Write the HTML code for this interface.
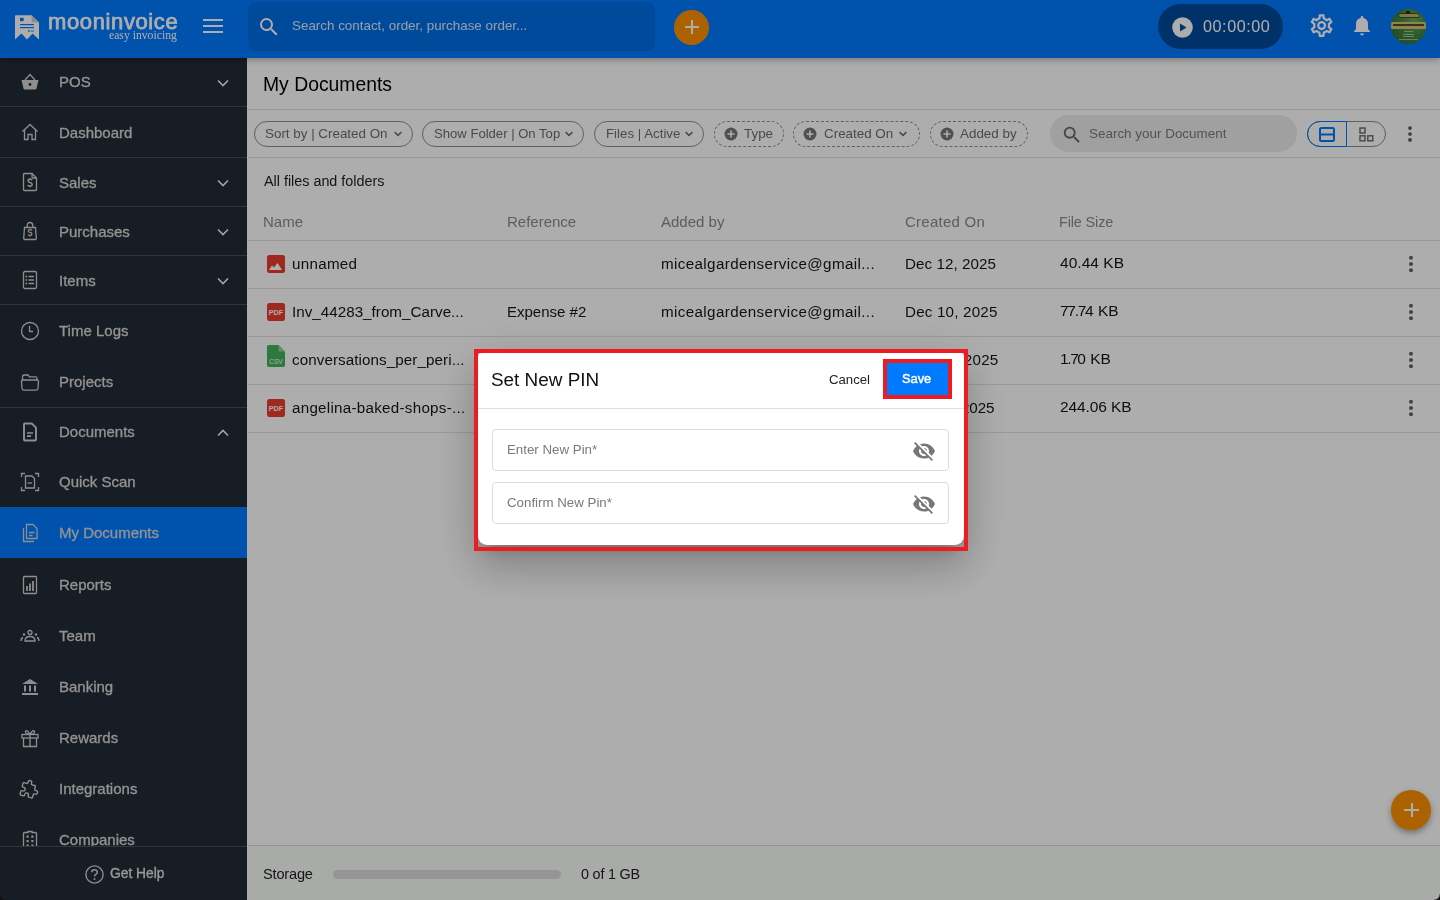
<!DOCTYPE html>
<html><head><meta charset="utf-8"><title>My Documents</title>
<style>
html,body{margin:0;padding:0;width:1440px;height:900px;overflow:hidden;background:#fff}
body{position:relative;font-family:"Liberation Sans",sans-serif}
.t{position:absolute;white-space:nowrap;line-height:1;will-change:transform}
.r{position:absolute}
.i{position:absolute;overflow:visible}
</style></head><body>
<div class="r" style="left:0px;top:0px;width:1440px;height:58px;background:#007aff;box-shadow:0 2px 6px rgba(0,0,0,.3);z-index:2"></div>
<svg class="i" style="left:15px;top:15px;z-index:3" width="25" height="25" viewBox="0 0 25 25"><path d="M0 1 Q0 0.3 1 0.3 L16.5 0.3 L24 7.5 L24 24.6 L17.5 18.6 L12 24.6 L6.5 18.6 L0 24.6 Z" fill="#fff"/><path d="M16.5 0.3 L16.5 7.5 L24 7.5 Z" fill="#cfcfcf"/><rect x="5" y="2.8" width="3.6" height="3.4" fill="#007aff"/><rect x="5" y="9" width="14" height="1.2" fill="#007aff"/><rect x="5" y="12" width="14" height="1.2" fill="#007aff"/><rect x="13" y="15.2" width="1.6" height="1.5" fill="#007aff"/><rect x="15.5" y="15.6" width="3.5" height="0.9" fill="#007aff"/></svg>
<div class="t" style="left:48px;top:10.68px;font-size:22px;color:#fff;font-weight:400;letter-spacing:0.62px;font-family:'Liberation Sans', sans-serif;z-index:3;-webkit-text-stroke:0.75px #fff">mooninvoice</div>
<div class="t" style="left:109px;top:30.10px;font-size:11.7px;color:#fff;font-weight:400;letter-spacing:0px;font-family:'Liberation Serif', serif;z-index:3">easy invoicing</div>
<div class="r" style="left:203px;top:19px;width:20px;height:2px;background:#fff;z-index:3"></div>
<div class="r" style="left:203px;top:25px;width:20px;height:2px;background:#fff;z-index:3"></div>
<div class="r" style="left:203px;top:31px;width:20px;height:2px;background:#fff;z-index:3"></div>
<div class="r" style="left:248px;top:2px;width:406.5px;height:49px;background:rgba(0,0,0,0.1);border-radius:8px;z-index:3"></div>
<svg class="i" style="left:257px;top:15px;z-index:3" width="24" height="24" viewBox="0 0 24 24"><path d="M15.5 14h-.79l-.28-.27A6.471 6.471 0 0 0 16 9.5 6.5 6.5 0 1 0 9.5 16c1.61 0 3.09-.59 4.23-1.57l.27.28v.79l5 4.99L20.49 19l-4.99-5zm-6 0C7.01 14 5 11.99 5 9.5S7.01 5 9.5 5 14 7.01 14 9.5 11.99 14 9.5 14z" fill="#fff"/></svg>
<div class="t" style="left:292.4px;top:18.66px;font-size:13.4px;color:rgba(255,255,255,.85);font-weight:400;letter-spacing:0px;font-family:'Liberation Sans', sans-serif;z-index:3">Search contact, order, purchase order...</div>
<div class="r" style="left:674px;top:10px;width:35px;height:35px;background:#ff9100;border-radius:50%;z-index:3"></div>
<div class="r" style="left:684.5px;top:26.3px;width:14.5px;height:2.0px;background:#fff;z-index:3"></div>
<div class="r" style="left:690.7px;top:20px;width:2.0px;height:14px;background:#fff;z-index:3"></div>
<div class="r" style="left:1158px;top:4px;width:124.5px;height:45px;background:#004b9c;border-radius:23px;z-index:3"></div>
<svg class="i" style="left:1171.5px;top:16.5px;z-index:3" width="21" height="21" viewBox="0 0 21 21"><circle cx="10.5" cy="10.5" r="10.3" fill="#fff"/><path d="M8 6.5 L14.5 10.5 L8 14.5 Z" fill="#004b9c"/></svg>
<div class="t" style="left:1202.8px;top:18.19px;font-size:16.2px;color:#fff;font-weight:400;letter-spacing:0.55px;font-family:'Liberation Sans', sans-serif;z-index:3">00:00:00</div>
<svg class="i" style="left:1308.4px;top:12.4px;z-index:3" width="27.2" height="27.2" viewBox="0 0 24 24"><path d="M19.43 12.98c.04-.32.07-.64.07-.98 0-.34-.03-.66-.07-.98l2.11-1.65c.19-.15.24-.42.12-.64l-2-3.46a.5.5 0 0 0-.61-.22l-2.49 1c-.52-.4-1.08-.73-1.69-.98l-.38-2.65A.488.488 0 0 0 14 2h-4c-.25 0-.46.18-.49.42l-.38 2.65c-.61.25-1.170.59-1.69.98l-2.49-1a.566.566 0 0 0-.18-.03c-.17 0-.34.09-.43.25l-2 3.46c-.13.22-.07.49.12.64l2.11 1.65c-.04.32-.07.65-.07.98 0 .33.03.66.07.98l-2.11 1.65c-.19.15-.24.42-.12.64l2 3.46a.5.5 0 0 0 .61.22l2.49-1c.52.4 1.08.73 1.69.98l.38 2.650c.03.24.24.42.49.42h4c.25 0 .46-.18.49-.42l.38-2.65c.61-.25 1.17-.59 1.69-.98l2.49 1c.06.02.12.03.18.03.17 0 .34-.09.43-.25l2-3.46c.12-.22.07-.49-.12-.64l-2.11-1.65zm-1.98-1.71c.04.31.05.52.05.73 0 .21-.02.43-.05.73l-.14 1.13.89.7 1.08.84-.7 1.21-1.27-.51-1.04-.42-.9.68c-.43.32-.84.56-1.25.73l-1.06.43-.16 1.13-.2 1.35h-1.4l-.19-1.35-.16-1.13-1.06-.43c-.43-.18-.83-.41-1.23-.71l-.91-.7-1.06.43-1.27.51-.7-1.21 1.08-.84.89-.7-.14-1.130c-.03-.31-.05-.54-.05-.74s.02-.43.05-.73l.14-1.13-.89-.7-1.08-.84.7-1.21 1.27.51 1.04.42.9-.68c.43-.32.84-.56 1.25-.73l1.06-.43.16-1.13.2-1.35h1.39l.19 1.35.16 1.13 1.06.43c.43.18.83.41 1.23.71l.91.7 1.06-.43 1.27-.51.7 1.21-1.07.85-.89.7.14 1.13zM12 8c-2.21 0-4 1.79-4 4s1.79 4 4 4 4-1.79 4-4-1.790-4-4-4zm0 6c-1.1 0-2-.9-2-2s.9-2 2-2 2 .9 2 2-.9 2-2 2z" fill="#fff"/></svg>
<svg class="i" style="left:1351.5px;top:15px;z-index:3" width="20" height="22" viewBox="0 0 20 22"><path d="M10 1 a1.3 1.3 0 0 1 1.3 1.3 v0.6 a6 6 0 0 1 4.7 5.9 v5.2 l2.5 3 H1.5 l2.5 -3 V8.8 a6 6 0 0 1 4.7 -5.9 v-0.6 A1.3 1.3 0 0 1 10 1z" fill="#fff"/><path d="M8 18.6 h4 a2 2 0 0 1 -4 0z" fill="#fff"/></svg>
<div class="r" style="left:1391px;top:9px;width:35px;height:35px;border-radius:50%;overflow:hidden;z-index:3;background:#3a7d40"><div class="r" style="left:0;top:0;width:35px;height:35px;background:radial-gradient(circle at 65% 35%,#6aa864 0%,#3f8544 45%,#2a6030 100%)"></div><div class="r" style="left:15px;top:2px;width:4px;height:2.5px;background:#2a2a1a"></div><div class="r" style="left:8px;top:5px;width:20px;height:3px;background:#c4b15e;border-radius:2px;box-shadow:0 0 0 0.7px #2f3f22"></div><div class="r" style="left:0;top:12.6px;width:35px;height:7px;background:#d3c56f"></div><div class="r" style="left:2px;top:15.2px;width:31px;height:2px;background:#3a3420;opacity:.85"></div><div class="r" style="left:13px;top:22px;width:9px;height:1px;background:#c8d8b0;opacity:.7"></div><div class="r" style="left:12px;top:24.6px;width:11px;height:1px;background:#c8d8b0;opacity:.7"></div><div class="r" style="left:12px;top:27.2px;width:11px;height:1px;background:#c8d8b0;opacity:.7"></div><div class="r" style="left:8px;top:29.8px;width:19px;height:1px;background:#c8d8b0;opacity:.7"></div></div>
<div class="r" style="left:0px;top:58px;width:247px;height:842px;background:#232c35;"></div>
<div class="r" style="left:0px;top:106px;width:247px;height:1px;background:#4a5058;"></div>
<div class="r" style="left:0px;top:157px;width:247px;height:1px;background:#4a5058;"></div>
<div class="r" style="left:0px;top:206px;width:247px;height:1px;background:#4a5058;"></div>
<div class="r" style="left:0px;top:255px;width:247px;height:1px;background:#4a5058;"></div>
<div class="r" style="left:0px;top:304px;width:247px;height:1px;background:#4a5058;"></div>
<div class="r" style="left:0px;top:407px;width:247px;height:1px;background:#4a5058;"></div>
<div class="r" style="left:0px;top:507px;width:247px;height:51px;background:#007aff;"></div>
<div class="t" style="left:59px;top:74.40px;font-size:15px;color:#d8d8d8;font-weight:400;letter-spacing:0px;font-family:'Liberation Sans', sans-serif;-webkit-text-stroke:0.3px #d8d8d8">POS</div>
<svg class="i" style="left:216px;top:76.1px;" width="14" height="14" viewBox="0 0 14 14"><path d="M2 4.5 L7 9.5 L12 4.5" fill="none" stroke="#f2f2f2" stroke-width="1.6"/></svg>
<div class="t" style="left:59px;top:124.50px;font-size:15px;color:#d8d8d8;font-weight:400;letter-spacing:0px;font-family:'Liberation Sans', sans-serif;-webkit-text-stroke:0.3px #d8d8d8">Dashboard</div>
<div class="t" style="left:59px;top:174.50px;font-size:15px;color:#d8d8d8;font-weight:400;letter-spacing:0px;font-family:'Liberation Sans', sans-serif;-webkit-text-stroke:0.3px #d8d8d8">Sales</div>
<svg class="i" style="left:216px;top:176.2px;" width="14" height="14" viewBox="0 0 14 14"><path d="M2 4.5 L7 9.5 L12 4.5" fill="none" stroke="#f2f2f2" stroke-width="1.6"/></svg>
<div class="t" style="left:59px;top:223.70px;font-size:15px;color:#d8d8d8;font-weight:400;letter-spacing:0px;font-family:'Liberation Sans', sans-serif;-webkit-text-stroke:0.3px #d8d8d8">Purchases</div>
<svg class="i" style="left:216px;top:225.4px;" width="14" height="14" viewBox="0 0 14 14"><path d="M2 4.5 L7 9.5 L12 4.5" fill="none" stroke="#f2f2f2" stroke-width="1.6"/></svg>
<div class="t" style="left:59px;top:272.60px;font-size:15px;color:#d8d8d8;font-weight:400;letter-spacing:0px;font-family:'Liberation Sans', sans-serif;-webkit-text-stroke:0.3px #d8d8d8">Items</div>
<svg class="i" style="left:216px;top:274.3px;" width="14" height="14" viewBox="0 0 14 14"><path d="M2 4.5 L7 9.5 L12 4.5" fill="none" stroke="#f2f2f2" stroke-width="1.6"/></svg>
<div class="t" style="left:59px;top:323.30px;font-size:15px;color:#d8d8d8;font-weight:400;letter-spacing:0px;font-family:'Liberation Sans', sans-serif;-webkit-text-stroke:0.3px #d8d8d8">Time Logs</div>
<div class="t" style="left:59px;top:374.30px;font-size:15px;color:#d8d8d8;font-weight:400;letter-spacing:0px;font-family:'Liberation Sans', sans-serif;-webkit-text-stroke:0.3px #d8d8d8">Projects</div>
<div class="t" style="left:59px;top:424.40px;font-size:15px;color:#d8d8d8;font-weight:400;letter-spacing:0px;font-family:'Liberation Sans', sans-serif;-webkit-text-stroke:0.3px #d8d8d8">Documents</div>
<svg class="i" style="left:216px;top:426.1px;" width="14" height="14" viewBox="0 0 14 14"><path d="M2 9.5 L7 4.5 L12 9.5" fill="none" stroke="#f2f2f2" stroke-width="1.6"/></svg>
<div class="t" style="left:59px;top:474.20px;font-size:15px;color:#d8d8d8;font-weight:400;letter-spacing:0px;font-family:'Liberation Sans', sans-serif;-webkit-text-stroke:0.3px #d8d8d8">Quick Scan</div>
<div class="t" style="left:59px;top:525.20px;font-size:15px;color:#d8d8d8;font-weight:400;letter-spacing:0px;font-family:'Liberation Sans', sans-serif;-webkit-text-stroke:0.3px #d8d8d8">My Documents</div>
<div class="t" style="left:59px;top:577.10px;font-size:15px;color:#d8d8d8;font-weight:400;letter-spacing:0px;font-family:'Liberation Sans', sans-serif;-webkit-text-stroke:0.3px #d8d8d8">Reports</div>
<div class="t" style="left:59px;top:628.10px;font-size:15px;color:#d8d8d8;font-weight:400;letter-spacing:0px;font-family:'Liberation Sans', sans-serif;-webkit-text-stroke:0.3px #d8d8d8">Team</div>
<div class="t" style="left:59px;top:679.30px;font-size:15px;color:#d8d8d8;font-weight:400;letter-spacing:0px;font-family:'Liberation Sans', sans-serif;-webkit-text-stroke:0.3px #d8d8d8">Banking</div>
<div class="t" style="left:59px;top:730.00px;font-size:15px;color:#d8d8d8;font-weight:400;letter-spacing:0px;font-family:'Liberation Sans', sans-serif;-webkit-text-stroke:0.3px #d8d8d8">Rewards</div>
<div class="t" style="left:59px;top:780.60px;font-size:15px;color:#d8d8d8;font-weight:400;letter-spacing:0px;font-family:'Liberation Sans', sans-serif;-webkit-text-stroke:0.3px #d8d8d8">Integrations</div>
<div class="t" style="left:59px;top:831.60px;font-size:15px;color:#d8d8d8;font-weight:400;letter-spacing:0px;font-family:'Liberation Sans', sans-serif;-webkit-text-stroke:0.3px #d8d8d8">Companies</div>
<svg class="i" style="left:20px;top:72px;" width="20" height="20" viewBox="0 0 20 20"><path d="M1.5 8 H18.5 L16.5 16.5 Q16.3 17.5 15.3 17.5 H4.7 Q3.7 17.5 3.5 16.5 Z" fill="#d2d2d2"/><path d="M5 8 L10 2.5 L15 8" fill="none" stroke="#d2d2d2" stroke-width="1.3"/><circle cx="10" cy="12.5" r="1.4" fill="#232c35"/></svg>
<svg class="i" style="left:20px;top:122px;" width="20" height="20" viewBox="0 0 20 20"><path d="M2.5 9.5 L10 2.5 L17.5 9.5 M4.5 8 V17.5 H8 V12.5 H12 V17.5 H15.5 V8" fill="none" stroke="#d2d2d2" stroke-width="1.3"/></svg>
<svg class="i" style="left:20px;top:172px;" width="20" height="20" viewBox="0 0 20 20"><path d="M3.5 2.5 Q3.5 1.5 4.5 1.5 H12 L16.5 6 V17.5 Q16.5 18.5 15.5 18.5 H4.5 Q3.5 18.5 3.5 17.5 Z M12 1.5 V5 Q12 6 13 6 H16.5" fill="none" stroke="#d2d2d2" stroke-width="1.3"/><path d="M12.2 8.3 Q11.8 7.2 10 7.2 Q8 7.2 8 8.8 Q8 10.1 10 10.5 Q12.2 10.9 12.2 12.4 Q12.2 14 10 14 Q8.2 14 7.8 12.9 M10 6 V7.2 M10 14 V15.2" fill="none" stroke="#d2d2d2" stroke-width="1.4"/></svg>
<svg class="i" style="left:20px;top:221px;" width="20" height="20" viewBox="0 0 20 20"><path d="M4.5 6.5 H15.5 L16.3 17 Q16.4 18.5 15 18.5 H5 Q3.6 18.5 3.7 17 Z M7.2 6.5 V4.5 Q7.2 1.5 10 1.5 Q12.8 1.5 12.8 4.5 V6.5" fill="none" stroke="#d2d2d2" stroke-width="1.3"/><path d="M11.9 9.6 Q11.6 8.7 10 8.7 Q8.3 8.7 8.3 10 Q8.3 11.1 10 11.4 Q11.9 11.7 11.9 13 Q11.9 14.4 10 14.4 Q8.5 14.4 8.1 13.5 M10 7.7 V8.7 M10 14.4 V15.4" fill="none" stroke="#d2d2d2" stroke-width="1.3"/></svg>
<svg class="i" style="left:20px;top:270px;" width="20" height="20" viewBox="0 0 20 20"><rect x="3.5" y="1.5" width="13" height="17" rx="1.5" fill="none" stroke="#d2d2d2" stroke-width="1.3"/><path d="M8.5 6.5 H14 M8.5 10 H14 M8.5 13.5 H14" fill="none" stroke="#d2d2d2" stroke-width="1.6"/><circle cx="6.3" cy="6.5" r="0.9" fill="#d2d2d2"/><circle cx="6.3" cy="10" r="0.9" fill="#d2d2d2"/><circle cx="6.3" cy="13.5" r="0.9" fill="#d2d2d2"/></svg>
<svg class="i" style="left:20px;top:321px;" width="20" height="20" viewBox="0 0 20 20"><circle cx="10" cy="10" r="8.5" fill="none" stroke="#d2d2d2" stroke-width="1.3"/><path d="M9.5 5 V10.5 H13" fill="none" stroke="#d2d2d2" stroke-width="1.3"/></svg>
<svg class="i" style="left:20px;top:372px;" width="20" height="20" viewBox="0 0 20 20"><path d="M2.5 8 V5 Q2.5 3 4.5 3 H8 L9.5 4.8 H15.5 Q17 4.8 17 6.3 V8" fill="none" stroke="#d2d2d2" stroke-width="1.3"/><path d="M1.5 9.5 Q1.5 8 3 8 H17 Q18.5 8 18.5 9.5 L18 16.5 Q17.8 18.2 16 18.2 H4 Q2.2 18.2 2 16.5 Z" fill="none" stroke="#d2d2d2" stroke-width="1.3"/></svg>
<svg class="i" style="left:20px;top:422px;" width="20" height="20" viewBox="0 0 20 20"><path d="M4 2.5 Q4 1.5 5 1.5 H11.8 L16 5.7 V17.5 Q16 18.5 15 18.5 H5 Q4 18.5 4 17.5 Z" fill="none" stroke="#d2d2d2" stroke-width="1.9" stroke-linejoin="round"/><path d="M7 11 H13 M7 14.2 H11" fill="none" stroke="#d2d2d2" stroke-width="1.7"/></svg>
<svg class="i" style="left:20px;top:472px;" width="20" height="20" viewBox="0 0 20 20"><path d="M1.5 5 V1.5 H5 M15 1.5 H18.5 V5 M18.5 15 V18.5 H15 M5 18.5 H1.5 V15" fill="none" stroke="#d2d2d2" stroke-width="1.3"/><path d="M5.5 4 H12 L14.5 6.5 V16 H5.5 Z" fill="none" stroke="#d2d2d2" stroke-width="1.3"/><path d="M7.5 11 H12" fill="none" stroke="#d2d2d2" stroke-width="1.3"/></svg>
<svg class="i" style="left:20px;top:523px;" width="20" height="20" viewBox="0 0 20 20"><path d="M6.5 1.5 H13 L17 5.5 V15.5 H6.5 Z" fill="none" stroke="#d2d2d2" stroke-width="1.3"/><path d="M3.5 5 V18.5 H14" fill="none" stroke="#d2d2d2" stroke-width="1.3"/><path d="M9 9.5 H14.5 M9 12.5 H12.5" fill="none" stroke="#d2d2d2" stroke-width="1.3"/></svg>
<svg class="i" style="left:20px;top:575px;" width="20" height="20" viewBox="0 0 20 20"><rect x="3.5" y="1.5" width="13" height="17" rx="1" fill="none" stroke="#d2d2d2" stroke-width="1.3"/><path d="M7 16 V11 M10 16 V8.5 M13 16 V6" fill="none" stroke="#d2d2d2" stroke-width="1.8"/></svg>
<svg class="i" style="left:20px;top:626px;" width="20" height="20" viewBox="0 0 20 20"><circle cx="10" cy="6.5" r="2" fill="none" stroke="#d2d2d2" stroke-width="1.3"/><path d="M5 15 Q5 10.5 10 10.5 Q15 10.5 15 15 Z" fill="none" stroke="#d2d2d2" stroke-width="1.3"/><circle cx="4" cy="8.5" r="1.2" fill="#d2d2d2"/><circle cx="16" cy="8.5" r="1.2" fill="#d2d2d2"/><path d="M1 15 Q1 12 3 11.5 M19 15 Q19 12 17 11.5" fill="none" stroke="#d2d2d2" stroke-width="1.3"/></svg>
<svg class="i" style="left:20px;top:677px;" width="20" height="20" viewBox="0 0 20 20"><path d="M2 7 L10 2 L18 7 Z" fill="#d2d2d2"/><rect x="4" y="8.5" width="2" height="6" fill="#d2d2d2"/><rect x="9" y="8.5" width="2" height="6" fill="#d2d2d2"/><rect x="14" y="8.5" width="2" height="6" fill="#d2d2d2"/><rect x="2" y="16" width="16" height="2" fill="#d2d2d2"/></svg>
<svg class="i" style="left:20px;top:728px;" width="20" height="20" viewBox="0 0 20 20"><rect x="2" y="6.5" width="16" height="3.5" fill="none" stroke="#d2d2d2" stroke-width="1.3"/><path d="M3.5 10 V18.5 H16.5 V10 M10 6.5 V18.5 M10 6.5 Q7 1 5.5 3.5 Q5 6 10 6.5 Q13 1 14.5 3.5 Q15 6 10 6.5" fill="none" stroke="#d2d2d2" stroke-width="1.3"/></svg>
<svg class="i" style="left:19px;top:778px;" width="22" height="22" viewBox="0 0 24 24"><path d="M4 7h3a1 1 0 0 0 1 -1v-1a2 2 0 0 1 4 0v1a1 1 0 0 0 1 1h3a1 1 0 0 1 1 1v3a1 1 0 0 0 1 1h1a2 2 0 0 1 0 4h-1a1 1 0 0 0 -1 1v3a1 1 0 0 1 -1 1h-3a1 1 0 0 1 -1 -1v-1a2 2 0 0 0 -4 0v1a1 1 0 0 1 -1 1h-3a1 1 0 0 1 -1 -1v-3a1 1 0 0 1 1 -1h1a2 2 0 0 0 0 -4h-1a1 1 0 0 1 -1 -1v-3a1 1 0 0 1 1 -1" fill="none" stroke="#d2d2d2" stroke-width="1.5" stroke-linejoin="round" transform="rotate(15 12 12)"/></svg>
<svg class="i" style="left:20px;top:830px;" width="20" height="20" viewBox="0 0 20 20"><path d="M3.5 19 V3.5 Q3.5 2.5 4.5 2.5 H8 V1.5 H12 V2.5 H15.5 Q16.5 2.5 16.5 3.5 V19" fill="none" stroke="#d2d2d2" stroke-width="1.3"/><rect x="6.5" y="5.5" width="2.2" height="2.2" fill="#d2d2d2"/><rect x="11.3" y="5.5" width="2.2" height="2.2" fill="#d2d2d2"/><rect x="6.5" y="10" width="2.2" height="2.2" fill="#d2d2d2"/><rect x="11.3" y="10" width="2.2" height="2.2" fill="#d2d2d2"/><rect x="6.5" y="14.5" width="2.2" height="2.2" fill="#d2d2d2"/><rect x="11.3" y="14.5" width="2.2" height="2.2" fill="#d2d2d2"/></svg>
<div class="r" style="left:0px;top:845.5px;width:247px;height:54.5px;background:#232c35;border-top:1px solid #4a5058"></div>
<svg class="i" style="left:84.5px;top:864.5px;" width="19" height="19" viewBox="0 0 19 19"><circle cx="9.5" cy="9.5" r="8.6" fill="none" stroke="#d2d2d2" stroke-width="1.4"/><path d="M6.8 7.3 Q6.8 4.8 9.5 4.8 Q12.2 4.8 12.2 7.2 Q12.2 8.6 10.7 9.4 Q9.5 10.1 9.5 11.6" fill="none" stroke="#d2d2d2" stroke-width="1.5"/><circle cx="9.5" cy="14" r="1" fill="#d2d2d2"/></svg>
<div class="t" style="left:109.7px;top:867.32px;font-size:13.8px;color:#e0e0e0;font-weight:400;letter-spacing:0px;font-family:'Liberation Sans', sans-serif;-webkit-text-stroke:0.3px #e0e0e0">Get Help</div>
<div class="r" style="left:246.5px;top:58px;width:1.5px;height:842px;background:rgba(255,255,255,.22);"></div>
<div class="r" style="left:247.5px;top:58px;width:1192.5px;height:787px;background:#ffffff;"></div>
<div class="t" style="left:263.4px;top:74.92px;font-size:19.35px;color:#000;font-weight:400;letter-spacing:0px;font-family:'Liberation Sans', sans-serif;">My Documents</div>
<div class="r" style="left:247.5px;top:109px;width:1192.5px;height:1px;background:#e2e2e2;"></div>
<div class="r" style="left:254px;top:121px;width:158.5px;height:26px;box-sizing:border-box;border:1px solid #8f8f8f;border-radius:13px"></div>
<div class="t" style="left:264.8px;top:126.76px;font-size:13.4px;color:#6e6e6e;font-weight:400;letter-spacing:0px;font-family:'Liberation Sans', sans-serif;">Sort by | Created On</div>
<svg class="i" style="left:392.8px;top:128.7px;" width="10" height="10" viewBox="0 0 10 10"><path d="M1.6 3.2 L5 6.3 L8.4 3.2" fill="none" stroke="#6e6e6e" stroke-width="1.6"/></svg>
<div class="r" style="left:422px;top:121px;width:162px;height:26px;box-sizing:border-box;border:1px solid #8f8f8f;border-radius:13px"></div>
<div class="t" style="left:433.5px;top:127.01px;font-size:13.1px;color:#6e6e6e;font-weight:400;letter-spacing:0px;font-family:'Liberation Sans', sans-serif;">Show Folder | On Top</div>
<svg class="i" style="left:564.3px;top:128.7px;" width="10" height="10" viewBox="0 0 10 10"><path d="M1.6 3.2 L5 6.3 L8.4 3.2" fill="none" stroke="#6e6e6e" stroke-width="1.6"/></svg>
<div class="r" style="left:594px;top:121px;width:110px;height:26px;box-sizing:border-box;border:1px solid #8f8f8f;border-radius:13px"></div>
<div class="t" style="left:605.5px;top:126.84px;font-size:13.3px;color:#6e6e6e;font-weight:400;letter-spacing:0px;font-family:'Liberation Sans', sans-serif;">Files | Active</div>
<svg class="i" style="left:684.3px;top:128.7px;" width="10" height="10" viewBox="0 0 10 10"><path d="M1.6 3.2 L5 6.3 L8.4 3.2" fill="none" stroke="#6e6e6e" stroke-width="1.6"/></svg>
<div class="r" style="left:714px;top:121px;width:70px;height:26px;box-sizing:border-box;border:1px dashed #8f8f8f;border-radius:13px"></div>
<div class="t" style="left:744px;top:126.76px;font-size:13.4px;color:#6e6e6e;font-weight:400;letter-spacing:0px;font-family:'Liberation Sans', sans-serif;">Type</div>
<svg class="i" style="left:724px;top:127px;" width="14" height="14" viewBox="0 0 14 14"><circle cx="7" cy="7" r="6.5" fill="#777"/><path d="M7 3.5 V10.5 M3.5 7 H10.5" stroke="#fff" stroke-width="1.6"/></svg>
<div class="r" style="left:793px;top:121px;width:127px;height:26px;box-sizing:border-box;border:1px dashed #8f8f8f;border-radius:13px"></div>
<div class="t" style="left:823.5px;top:126.76px;font-size:13.4px;color:#6e6e6e;font-weight:400;letter-spacing:0px;font-family:'Liberation Sans', sans-serif;">Created On</div>
<svg class="i" style="left:897.5999999999999px;top:128.7px;" width="10" height="10" viewBox="0 0 10 10"><path d="M1.6 3.2 L5 6.3 L8.4 3.2" fill="none" stroke="#6e6e6e" stroke-width="1.6"/></svg>
<svg class="i" style="left:803px;top:127px;" width="14" height="14" viewBox="0 0 14 14"><circle cx="7" cy="7" r="6.5" fill="#777"/><path d="M7 3.5 V10.5 M3.5 7 H10.5" stroke="#fff" stroke-width="1.6"/></svg>
<div class="r" style="left:930px;top:121px;width:98px;height:26px;box-sizing:border-box;border:1px dashed #8f8f8f;border-radius:13px"></div>
<div class="t" style="left:960px;top:126.76px;font-size:13.4px;color:#6e6e6e;font-weight:400;letter-spacing:0px;font-family:'Liberation Sans', sans-serif;">Added by</div>
<svg class="i" style="left:940px;top:127px;" width="14" height="14" viewBox="0 0 14 14"><circle cx="7" cy="7" r="6.5" fill="#777"/><path d="M7 3.5 V10.5 M3.5 7 H10.5" stroke="#fff" stroke-width="1.6"/></svg>
<div class="r" style="left:1049.5px;top:115px;width:247.5px;height:37px;background:#ececec;border-radius:18.5px"></div>
<svg class="i" style="left:1061px;top:124px;" width="22" height="22" viewBox="0 0 24 24"><path d="M15.5 14h-.79l-.28-.27A6.471 6.471 0 0 0 16 9.5 6.5 6.5 0 1 0 9.5 16c1.61 0 3.09-.59 4.23-1.57l.27.28v.79l5 4.99L20.49 19l-4.99-5zm-6 0C7.01 14 5 11.99 5 9.5S7.01 5 9.5 5 14 7.01 14 9.5 11.99 14 9.5 14z" fill="#666"/></svg>
<div class="t" style="left:1089px;top:127.11px;font-size:13.45px;color:#7a7a7a;font-weight:400;letter-spacing:0px;font-family:'Liberation Sans', sans-serif;">Search your Document</div>
<div class="r" style="left:1307px;top:121px;width:78.5px;height:26px;background:transparent;box-sizing:border-box;border:1px solid #8c8c8c;border-radius:13px"></div>
<div class="r" style="left:1307px;top:121px;width:40px;height:26px;background:transparent;box-sizing:border-box;border:1px solid #007aff;border-right-width:1.5px;border-radius:13px 0 0 13px"></div>
<svg class="i" style="left:1318.5px;top:126.5px;" width="16" height="15" viewBox="0 0 16 15"><rect x="1" y="1" width="14" height="13" rx="1.5" fill="none" stroke="#007aff" stroke-width="2"/><path d="M1 7.5 H15" stroke="#007aff" stroke-width="2"/></svg>
<svg class="i" style="left:1358.5px;top:126.5px;" width="15" height="15" viewBox="0 0 15 15"><rect x="1" y="1" width="5" height="5" fill="none" stroke="#707070" stroke-width="1.5"/><rect x="1" y="8.8" width="5" height="5" fill="none" stroke="#707070" stroke-width="1.5"/><rect x="8.8" y="8.8" width="5" height="5" fill="none" stroke="#707070" stroke-width="1.5"/></svg>
<svg class="i" style="left:1407.2px;top:125px;" width="6" height="18" viewBox="0 0 6 18"><circle cx="3" cy="3.1" r="1.85" fill="#5a5a5a"/><circle cx="3" cy="9" r="1.85" fill="#5a5a5a"/><circle cx="3" cy="14.9" r="1.85" fill="#5a5a5a"/></svg>
<div class="r" style="left:247.5px;top:157px;width:1192.5px;height:1px;background:#e2e2e2;"></div>
<div class="t" style="left:264px;top:173.85px;font-size:14.35px;color:#1e1e1e;font-weight:400;letter-spacing:0px;font-family:'Liberation Sans', sans-serif;">All files and folders</div>
<div class="t" style="left:263px;top:214.20px;font-size:15px;color:#8a8a8a;font-weight:400;letter-spacing:0px;font-family:'Liberation Sans', sans-serif;">Name</div>
<div class="t" style="left:507.2px;top:214.20px;font-size:15px;color:#8a8a8a;font-weight:400;letter-spacing:0px;font-family:'Liberation Sans', sans-serif;">Reference</div>
<div class="t" style="left:661.2px;top:214.20px;font-size:15px;color:#8a8a8a;font-weight:400;letter-spacing:0px;font-family:'Liberation Sans', sans-serif;">Added by</div>
<div class="t" style="left:905.4px;top:214.20px;font-size:15px;color:#8a8a8a;font-weight:400;letter-spacing:0.25px;font-family:'Liberation Sans', sans-serif;">Created On</div>
<div class="t" style="left:1058.5px;top:214.71px;font-size:14.4px;color:#8a8a8a;font-weight:400;letter-spacing:-0.12px;font-family:'Liberation Sans', sans-serif;">File Size</div>
<div class="r" style="left:247.5px;top:240px;width:1192.5px;height:1px;background:#e2e2e2;"></div>
<div class="r" style="left:247.5px;top:288px;width:1192.5px;height:1px;background:#e2e2e2;"></div>
<svg class="i" style="left:267px;top:255px;" width="18" height="18" viewBox="0 0 18 18"><rect x="0" y="0" width="18" height="18" rx="2.5" fill="#eb3d30"/><path d="M2 15 L5 10.5 L7 12.5 L10.5 8 L15 15 Z" fill="#fff"/></svg>
<div class="t" style="left:291.7px;top:255.73px;font-size:15.2px;color:#161616;font-weight:400;letter-spacing:0.28px;font-family:'Liberation Sans', sans-serif;">unnamed</div>
<div class="t" style="left:660.9px;top:255.73px;font-size:15.2px;color:#161616;font-weight:400;letter-spacing:0.37px;font-family:'Liberation Sans', sans-serif;">micealgardenservice@gmail...</div>
<div class="t" style="left:905.1px;top:255.73px;font-size:15.2px;color:#161616;font-weight:400;letter-spacing:0.05px;font-family:'Liberation Sans', sans-serif;">Dec 12, 2025</div>
<div class="t" style="left:1059.7px;top:255.48px;font-size:15.5px;color:#161616;font-weight:400;letter-spacing:0.03px;font-family:'Liberation Sans', sans-serif;">40.44 KB</div>
<svg class="i" style="left:1407.5px;top:255px;" width="6" height="18" viewBox="0 0 6 18"><circle cx="3" cy="2.8" r="2" fill="#666"/><circle cx="3" cy="9" r="2" fill="#666"/><circle cx="3" cy="15.2" r="2" fill="#666"/></svg>
<div class="r" style="left:247.5px;top:336px;width:1192.5px;height:1px;background:#e2e2e2;"></div>
<svg class="i" style="left:267px;top:303px;" width="18" height="18" viewBox="0 0 18 18"><rect x="0" y="0" width="18" height="18" rx="2.5" fill="#eb3d30"/><text x="9" y="12.3" font-size="7.2" text-anchor="middle" fill="#fff" font-family="Liberation Sans" font-weight="700">PDF</text></svg>
<div class="t" style="left:291.7px;top:303.73px;font-size:15.2px;color:#161616;font-weight:400;letter-spacing:0.02px;font-family:'Liberation Sans', sans-serif;">Inv_44283_from_Carve...</div>
<div class="t" style="left:507.2px;top:303.90px;font-size:15px;color:#161616;font-weight:400;letter-spacing:0px;font-family:'Liberation Sans', sans-serif;">Expense #2</div>
<div class="t" style="left:660.9px;top:303.73px;font-size:15.2px;color:#161616;font-weight:400;letter-spacing:0.37px;font-family:'Liberation Sans', sans-serif;">micealgardenservice@gmail...</div>
<div class="t" style="left:905.1px;top:303.73px;font-size:15.2px;color:#161616;font-weight:400;letter-spacing:0.18px;font-family:'Liberation Sans', sans-serif;">Dec 10, 2025</div>
<div class="t" style="left:1059.7px;top:303.48px;font-size:15.5px;color:#161616;font-weight:400;letter-spacing:0px;font-family:'Liberation Sans', sans-serif;"><span style="letter-spacing:-1.3px">77.7</span>4 KB</div>
<svg class="i" style="left:1407.5px;top:303px;" width="6" height="18" viewBox="0 0 6 18"><circle cx="3" cy="2.8" r="2" fill="#666"/><circle cx="3" cy="9" r="2" fill="#666"/><circle cx="3" cy="15.2" r="2" fill="#666"/></svg>
<div class="r" style="left:247.5px;top:384px;width:1192.5px;height:1px;background:#e2e2e2;"></div>
<svg class="i" style="left:267px;top:345px;" width="18" height="22" viewBox="0 0 18 22"><path d="M2 0 H11.5 L18 6.5 V20 Q18 22 16 22 H2 Q0 22 0 20 V2 Q0 0 2 0 Z" fill="#43b35a"/><path d="M11.5 0 L18 6.5 H13 Q11.5 6.5 11.5 5 Z" fill="#8fd29c"/><text x="9" y="19" font-size="6.5" text-anchor="middle" fill="#fff" font-family="Liberation Sans">CSV</text></svg>
<div class="t" style="left:291.7px;top:351.73px;font-size:15.2px;color:#161616;font-weight:400;letter-spacing:0.08px;font-family:'Liberation Sans', sans-serif;">conversations_per_peri...</div>
<div class="t" style="left:660.9px;top:351.73px;font-size:15.2px;color:#161616;font-weight:400;letter-spacing:0.37px;font-family:'Liberation Sans', sans-serif;">micealgardenservice@gmail...</div>
<div class="t" style="left:905.1px;top:351.73px;font-size:15.2px;color:#161616;font-weight:400;letter-spacing:0.27px;font-family:'Liberation Sans', sans-serif;">Dec 10, 2025</div>
<div class="t" style="left:1059.7px;top:351.48px;font-size:15.5px;color:#161616;font-weight:400;letter-spacing:0px;font-family:'Liberation Sans', sans-serif;"><span style="letter-spacing:-1.4px">1.7</span>0 KB</div>
<svg class="i" style="left:1407.5px;top:351px;" width="6" height="18" viewBox="0 0 6 18"><circle cx="3" cy="2.8" r="2" fill="#666"/><circle cx="3" cy="9" r="2" fill="#666"/><circle cx="3" cy="15.2" r="2" fill="#666"/></svg>
<div class="r" style="left:247.5px;top:432px;width:1192.5px;height:1px;background:#e2e2e2;"></div>
<svg class="i" style="left:267px;top:399px;" width="18" height="18" viewBox="0 0 18 18"><rect x="0" y="0" width="18" height="18" rx="2.5" fill="#eb3d30"/><text x="9" y="12.3" font-size="7.2" text-anchor="middle" fill="#fff" font-family="Liberation Sans" font-weight="700">PDF</text></svg>
<div class="t" style="left:291.7px;top:399.73px;font-size:15.2px;color:#161616;font-weight:400;letter-spacing:0.26px;font-family:'Liberation Sans', sans-serif;">angelina-baked-shops-...</div>
<div class="t" style="left:660.9px;top:399.73px;font-size:15.2px;color:#161616;font-weight:400;letter-spacing:0.37px;font-family:'Liberation Sans', sans-serif;">micealgardenservice@gmail...</div>
<div class="t" style="left:905.1px;top:399.73px;font-size:15.2px;color:#161616;font-weight:400;letter-spacing:-0.08px;font-family:'Liberation Sans', sans-serif;">Dec 10, 2025</div>
<div class="t" style="left:1059.7px;top:399.48px;font-size:15.5px;color:#161616;font-weight:400;letter-spacing:-0.1px;font-family:'Liberation Sans', sans-serif;">244.06 KB</div>
<svg class="i" style="left:1407.5px;top:399px;" width="6" height="18" viewBox="0 0 6 18"><circle cx="3" cy="2.8" r="2" fill="#666"/><circle cx="3" cy="9" r="2" fill="#666"/><circle cx="3" cy="15.2" r="2" fill="#666"/></svg>
<div class="r" style="left:247.5px;top:845px;width:1192.5px;height:55px;background:#f9fcf8;border-top:1px solid #dcdcdc;box-sizing:border-box"></div>
<div class="t" style="left:263px;top:866.64px;font-size:14.6px;color:#222;font-weight:400;letter-spacing:-0.2px;font-family:'Liberation Sans', sans-serif;">Storage</div>
<div class="r" style="left:333.3px;top:870.2px;width:227.7px;height:8.799999999999955px;background:#dcdcdc;border-radius:5px"></div>
<div class="t" style="left:580.8px;top:866.81px;font-size:14.4px;color:#222;font-weight:400;letter-spacing:-0.2px;font-family:'Liberation Sans', sans-serif;">0 of 1 GB</div>
<div class="r" style="left:1391px;top:790px;width:40px;height:40px;background:#ff9100;border-radius:50%;box-shadow:0 3px 6px rgba(0,0,0,.35)"></div>
<div class="r" style="left:1404px;top:809px;width:15px;height:2px;background:#fff;"></div>
<div class="r" style="left:1410.5px;top:803px;width:2.0px;height:14px;background:#fff;"></div>
<div class="r" style="left:0px;top:894px;width:6px;height:6px;background:radial-gradient(circle at 100% 0%, transparent 5px, #111 6.5px);z-index:30"></div>
<div class="r" style="left:1434px;top:894px;width:6px;height:6px;background:radial-gradient(circle at 0% 0%, transparent 5px, #111 6.5px);z-index:30"></div>
<div class="r" style="left:0px;top:0px;width:1440px;height:900px;background:rgba(0,0,0,0.32);z-index:10"></div>
<div style="position:absolute;left:0;top:0;width:1440px;height:900px;z-index:20">
<div class="r" style="left:478px;top:353px;width:486px;height:191.79999999999995px;background:#fff;border-radius:4px 4px 9px 9px;box-shadow:0 11px 15px -7px rgba(0,0,0,.2),0 24px 38px 3px rgba(0,0,0,.14),0 9px 46px 8px rgba(0,0,0,.12)"></div>
<div class="t" style="left:491.3px;top:370.60px;font-size:18.9px;color:#111;font-weight:400;letter-spacing:0px;font-family:'Liberation Sans', sans-serif;">Set New PIN</div>
<div class="r" style="left:478px;top:408px;width:486px;height:1px;background:#dedede;"></div>
<div class="t" style="left:828.5px;top:372.83px;font-size:13.2px;color:#222;font-weight:400;letter-spacing:0px;font-family:'Liberation Sans', sans-serif;">Cancel</div>
<div class="r" style="left:886.5px;top:363px;width:62.0px;height:32px;background:#007aff;"></div>
<div class="t" style="left:902.4px;top:373.16px;font-size:12.8px;color:#fff;font-weight:400;letter-spacing:0px;font-family:'Liberation Sans', sans-serif;-webkit-text-stroke:0.45px #fff">Save</div>
<div class="r" style="left:492px;top:429.3px;width:456.5px;height:42.0px;background:#fff;box-sizing:border-box;border:1px solid #dcdcdc;border-radius:4px"></div>
<div class="t" style="left:506.8px;top:442.64px;font-size:13.3px;color:#7a7a7a;font-weight:400;letter-spacing:0px;font-family:'Liberation Sans', sans-serif;">Enter New Pin*</div>
<svg class="i" style="left:912px;top:439.3px;" width="24" height="24" viewBox="0 0 24 24"><path d="M12 7c2.76 0 5 2.24 5 5 0 .65-.13 1.26-.36 1.83l2.92 2.92c1.51-1.26 2.7-2.89 3.43-4.75-1.73-4.39-6-7.5-11-7.5-1.4 0-2.74.25-3.98.7l2.16 2.16C10.74 7.13 11.35 7 12 7zM2 4.27l2.28 2.28.46.46A11.804 11.804 0 0 0 1 12c1.73 4.39 6 7.5 11 7.5 1.55 0 3.03-.3 4.38-.84l.42.42L19.73 22 21 20.73 3.27 3 2 4.27zM7.53 9.8l1.55 1.55c-.05.21-.08.43-.08.65 0 1.66 1.34 3 3 3 .22 0 .44-.03.65-.08l1.55 1.55c-.67.33-1.41.53-2.2.53-2.76 0-5-2.24-5-5 0-.79.2-1.53.53-2.2zm4.31-.78l3.15 3.15.02-.16c0-1.66-1.34-3-3-3l-.17.01z" fill="#777"/></svg>
<div class="r" style="left:492px;top:482.2px;width:456.5px;height:42.099999999999966px;background:#fff;box-sizing:border-box;border:1px solid #dcdcdc;border-radius:4px"></div>
<div class="t" style="left:506.8px;top:495.54px;font-size:13.3px;color:#7a7a7a;font-weight:400;letter-spacing:0px;font-family:'Liberation Sans', sans-serif;">Confirm New Pin*</div>
<svg class="i" style="left:912px;top:492.25px;" width="24" height="24" viewBox="0 0 24 24"><path d="M12 7c2.76 0 5 2.24 5 5 0 .65-.13 1.26-.36 1.83l2.92 2.92c1.51-1.26 2.7-2.89 3.43-4.75-1.73-4.39-6-7.5-11-7.5-1.4 0-2.74.25-3.98.7l2.16 2.16C10.74 7.13 11.35 7 12 7zM2 4.27l2.28 2.28.46.46A11.804 11.804 0 0 0 1 12c1.73 4.39 6 7.5 11 7.5 1.55 0 3.03-.3 4.38-.84l.42.42L19.73 22 21 20.73 3.27 3 2 4.27zM7.53 9.8l1.55 1.55c-.05.21-.08.43-.08.65 0 1.66 1.34 3 3 3 .22 0 .44-.03.65-.08l1.55 1.55c-.67.33-1.41.53-2.2.53-2.76 0-5-2.24-5-5 0-.79.2-1.53.53-2.2zm4.31-.78l3.15 3.15.02-.16c0-1.66-1.34-3-3-3l-.17.01z" fill="#777"/></svg>
<div class="r" style="left:474px;top:349px;width:493.5px;height:201.5px;background:transparent;box-sizing:border-box;border:4px solid #ed1c24"></div>
<div class="r" style="left:882.5px;top:359px;width:69.5px;height:40px;background:transparent;box-sizing:border-box;border:4px solid #ed1c24"></div>
</div>
</body></html>
